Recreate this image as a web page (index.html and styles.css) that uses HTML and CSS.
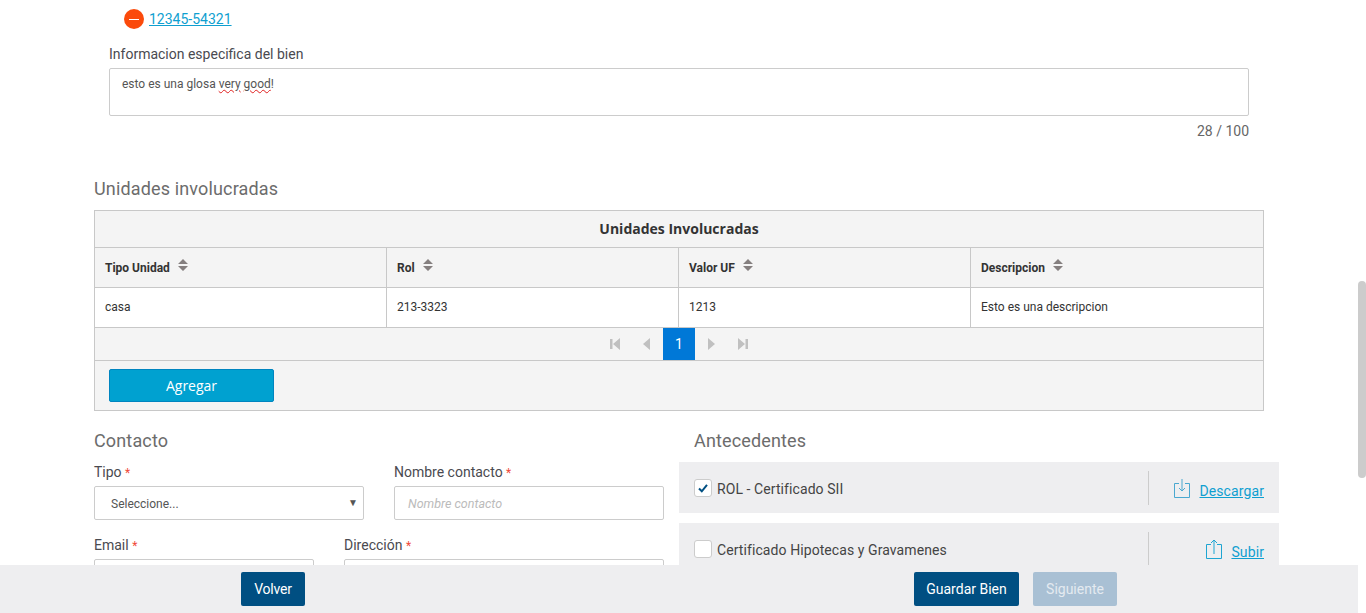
FILE: index.html
```html
<!DOCTYPE html>
<html lang="es">
<head>
<meta charset="utf-8">
<title>Bien</title>
<link rel="stylesheet" href="styles.css">
</head>
<body>
<main class="page">
  <div class="rol-item">
    <span class="remove"><span class="remove-bar"></span></span>
    <a class="link rol-link" href="#">12345-54321</a>
  </div>
  <section class="info">
    <label class="info-label">Informacion especifica del bien</label>
    <div class="area">esto es una glosa <span class="spell">very</span> <span class="spell">good</span>!</div>
    <div class="counter">28 / 100</div>
  </section>

  <h2 class="heading units-heading">Unidades involucradas</h2>
  <div class="panel">
    <div class="caption">Unidades Involucradas</div>
    <div class="row head">
      <div class="cell">Tipo Unidad <svg class="sort" viewBox="0 0 10 12"><path d="M5 0l5 5H0zM0 7h10l-5 5z"/></svg></div>
      <div class="cell">Rol <svg class="sort" viewBox="0 0 10 12"><path d="M5 0l5 5H0zM0 7h10l-5 5z"/></svg></div>
      <div class="cell">Valor UF <svg class="sort" viewBox="0 0 10 12"><path d="M5 0l5 5H0zM0 7h10l-5 5z"/></svg></div>
      <div class="cell">Descripcion <svg class="sort" viewBox="0 0 10 12"><path d="M5 0l5 5H0zM0 7h10l-5 5z"/></svg></div>
    </div>
    <div class="row body">
      <div class="cell">casa</div>
      <div class="cell">213-3323</div>
      <div class="cell">1213</div>
      <div class="cell">Esto es una descripcion</div>
    </div>
    <div class="pager">
      <span class="pg"><svg viewBox="0 0 10 12"><path d="M0 1h2.500v10H0zM10 0v12L3 6z"/></svg></span>
      <span class="pg"><svg viewBox="0 0 10 12"><path d="M8 0v12L1 6z"/></svg></span>
      <span class="pg current">1</span>
      <span class="pg"><svg viewBox="0 0 10 12"><path d="M2 0v12l7-6z"/></svg></span>
      <span class="pg"><svg viewBox="0 0 10 12"><path d="M0 0v12l7-6zM7.500 1H10v10H7.500z"/></svg></span>
    </div>
    <div class="panel-foot"><button class="add">Agregar</button></div>
  </div>

  <div class="lower">
    <section class="contact">
      <h2 class="heading">Contacto</h2>
      <div class="fields-a">
        <div class="field">
          <label class="flabel">Tipo <span class="req">*</span></label>
          <div class="input select">Seleccione...<span class="caret">▼</span></div>
        </div>
        <div class="field">
          <label class="flabel">Nombre contacto <span class="req">*</span></label>
          <div class="input placeholder">Nombre contacto</div>
        </div>
      </div>
      <div class="fields-b">
        <div class="field">
          <label class="flabel">Email <span class="req">*</span></label>
          <div class="input"></div>
        </div>
        <div class="field">
          <label class="flabel">Dirección <span class="req">*</span></label>
          <div class="input"></div>
        </div>
      </div>
    </section>
    <section class="docs">
      <h2 class="heading docs-heading">Antecedentes</h2>
      <div class="doc">
        <div class="doc-name">
          <span class="check"><svg viewBox="0 0 12 12"><path d="M2 6.500l2.800 2.800L10 2.800" fill="none" stroke="#004f82" stroke-width="2"/></svg></span>
          ROL - Certificado SII
        </div>
        <div class="doc-action">
          <svg class="doc-icon down" viewBox="0 0 16 19"><path d="M5 4.500H.5v14h15v-14H11M8 0v12M5 9l3 3 3-3" fill="none" stroke="#4aa8d0"/></svg>
          <a class="link" href="#">Descargar</a>
        </div>
      </div>
      <div class="doc">
        <div class="doc-name"><span class="check"></span>Certificado Hipotecas y Gravamenes</div>
        <div class="doc-action">
          <svg class="doc-icon up" viewBox="0 0 16 20"><path d="M5 5.500H.5v14h15v-14H11M8 15V1M5 4l3-3 3 3" fill="none" stroke="#1ea5d2"/></svg>
          <a class="link" href="#">Subir</a>
        </div>
      </div>
    </section>
  </div>
</main>

<footer class="bar">
  <button class="btn volver">Volver</button>
  <button class="btn guardar">Guardar Bien</button>
  <button class="btn siguiente">Siguiente</button>
</footer>
<div class="thumb"></div>
</body>
</html>
```
FILE: styles.css
```css
* { box-sizing: border-box; }
html, body { margin: 0; height: 613px; overflow: hidden; background: #fff; }
body { font-family: Roboto, "Liberation Sans", sans-serif; color: #3c3c46; font-size: 14px; }
.page { width: 1358px; padding: 9px 0 0 94px; }
.link { color: #0f9fd0; text-decoration: underline; font-size: 14px; }

.rol-item { display: flex; align-items: center; gap: 5px; height: 20px; margin-left: 30px; }
.remove { width: 20px; height: 20px; border-radius: 50%; background: #fb4a0b; display: flex; align-items: center; justify-content: center; }
.remove-bar { width: 10px; height: 1px; background: #fff; }
.rol-link { font-size: 14px; }

.info { margin: 17px 0 0 15px; width: 1140px; }
.info-label { display: block; height: 22px; line-height: 16px; font-size: 14px; color: #4a4a50; }
.area { height: 48px; border: 1px solid #ccc; border-radius: 2px; padding: 7px 12px; font-size: 12px; line-height: 16px; color: #555; }
.spell { text-decoration: underline wavy #e02020 1px; text-underline-offset: 1px; }
.counter { margin-top: 7px; text-align: right; font-size: 14px; line-height: 16px; color: #666; }

.heading { margin: 0; font-weight: 400; font-size: 18px; line-height: 22px; letter-spacing: .15px; color: #6c6c6c; }
.units-heading { margin-top: 39px; }

.panel { margin-top: 10px; width: 1170px; border: 1px solid #c8c8c8; background: #f4f4f4; }
.caption { height: 37px; line-height: 36px; text-align: center; font-family: "Open Sans", sans-serif; font-weight: 700; font-size: 14px; color: #333; border-bottom: 1px solid #c8c8c8; }
.row { display: grid; grid-template-columns: 292px 292px 292px 1fr; border-bottom: 1px solid #c8c8c8; }
.cell { padding: 0 10px 2px; font-size: 12px; display: flex; align-items: center; gap: 8px; border-right: 1px solid #c8c8c8; color: #333; }
.cell:last-child { border-right: 0; }
.head { height: 40px; }
.head .cell { font-weight: 700; padding-bottom: 0; }
.body { height: 40px; background: #fff; }
.sort { width: 10px; height: 12px; fill: #857f7f; margin-top: -5px; }

.pager { height: 33px; display: flex; justify-content: center; border-bottom: 1px solid #c8c8c8; }
.pg { width: 32px; height: 32px; display: flex; align-items: center; justify-content: center; }
.pg svg { width: 10px; height: 12px; fill: #c0c0c0; }
.current { background: #0078d7; color: #fff; font-size: 14px; }

.panel-foot { height: 49px; padding: 8px 14px; }
.add { display: block; width: 165px; height: 33px; padding: 0; border: 1px solid #0085c0; border-radius: 2px; background: #00a1d0; color: #fff; font-family: "Open Sans", sans-serif; font-size: 14px; }

.lower { display: flex; margin-top: 19px; }
.contact { width: 570px; }
.fields-a, .fields-b { display: grid; column-gap: 30px; }
.fields-a { grid-template-columns: 270px 270px; margin-top: 10px; }
.fields-b { grid-template-columns: 220px 320px; margin-top: 15px; }
.flabel { display: block; height: 24px; line-height: 20px; color: #4a4a50; font-size: 14px; }
.req { color: #f04a3a; font-size: 12px; }
.input { height: 34px; border: 1px solid #ccc; border-radius: 2px; background: #fff; font-size: 12px; line-height: 34px; padding: 0 13px; }
.select { position: relative; padding-left: 16px; color: #555; }
.caret { position: absolute; right: 5px; top: -1px; font-size: 10px; color: #555; }
.placeholder { font-style: italic; font-size: 12.500px; color: #bbb; }

.docs { width: 600px; margin-left: 15px; }
.docs-heading { padding-left: 15px; }
.doc { display: flex; align-items: center; height: 51px; margin-bottom: 10px; padding: 0 15px; background: #eeeef0; font-size: 14px; }
.docs-heading + .doc { margin-top: 10px; }
.doc-name { flex: 1; display: flex; align-items: center; gap: 5px; padding-top: 2px; color: #444; letter-spacing: .08px; }
.check { width: 18px; height: 18px; margin-top: -2px; border: 1px solid #ccc; border-radius: 3px; background: #fff; display: flex; align-items: center; justify-content: center; }
.check svg { width: 12px; height: 12px; }
.doc-action { width: 116px; height: 34px; padding-bottom: 5px; border-left: 1px solid #ccc; display: flex; align-items: flex-end; justify-content: flex-end; gap: 9px; line-height: 18px; letter-spacing: .1px; }
.doc-icon { width: 16px; margin-bottom: 2px; }
.down { height: 19px; }
.up { height: 20px; }

.bar { position: fixed; left: 0; bottom: 0; width: 1358px; height: 48px; background: #eeeef0; display: flex; align-items: center; padding: 0 0 0 241px; }
.btn { height: 34px; border: 0; border-radius: 2px; padding: 0; color: #fff; background: #004f82; font-family: Roboto, sans-serif; font-size: 14px; }
.volver { width: 64px; margin-right: 609px; letter-spacing: -.2px; }
.guardar { width: 105px; margin-right: 14px; }
.siguiente { width: 84px; background: #a9c0d4; color: #e4eaf0; }

.thumb { position: fixed; right: 0; top: 281px; width: 8px; height: 197px; border-radius: 4px; background: #ccc; }
```
